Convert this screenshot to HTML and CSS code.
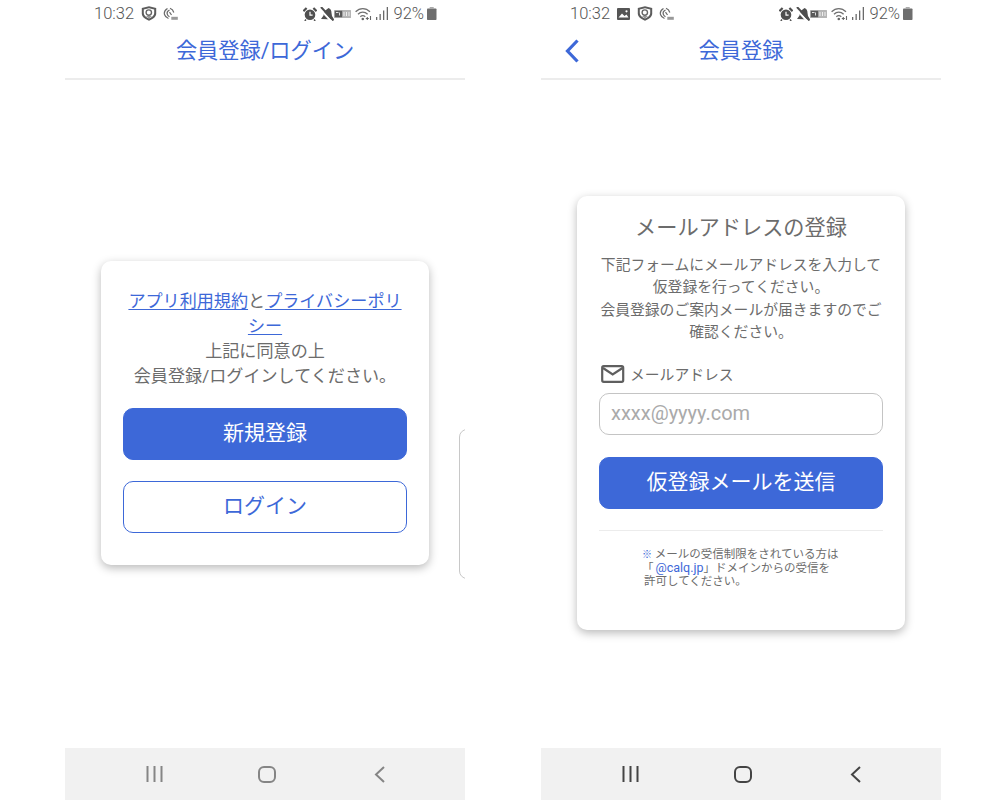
FILE: index.html
```html
<!DOCTYPE html>
<html lang="ja">
<head>
<meta charset="utf-8">
<title>会員登録</title>
<link rel="stylesheet" href="styles.css">
</head>
<body>
<svg class="defs" width="0" height="0" aria-hidden="true">
  <symbol id="i-shield" viewBox="0 0 16 15">
    <path d="M.8 2 8 .3 15.200 2v5.500c0 3.200-3 5.500-7.200 7.200C3.800 13 .8 10.700.8 7.500z" fill="#5c5c5c"/>
    <path d="M2.800 3.500 8 2.300l5.200 1.200v3.800c0 2.300-2.200 4-5.200 5.300-3-1.300-5.200-3-5.200-5.300z" fill="#fff"/>
    <circle cx="7.800" cy="6.600" r="2.700" fill="none" stroke="#666" stroke-width="1.400"/>
    <path d="M4.800 10.300h6.200L8 12z" fill="#777"/>
  </symbol>
  <symbol id="i-nfc" viewBox="0 0 15 14">
    <g fill="none" stroke="#6a6a6a" stroke-width="1.200">
      <path d="M4.500 1.500C2 3 .8 5 1.500 7.500c.5 1.800 2 3.300 4 4"/>
      <path d="M6.500 3C4.500 4 3.700 5.500 4.200 7.200c.3 1 1.200 2 2.300 2.500"/>
      <path d="M7 1.200c2 .8 3.300 2.200 3.800 4.300"/>
      <path d="M6.500 5.200 8.500 8"/>
    </g>
    <rect x="8.300" y="9.800" width="6.500" height="3" fill="#999"/>
  </symbol>
  <symbol id="i-image" viewBox="0 0 13 12">
    <rect width="13" height="12" rx="1" fill="#555"/>
    <path d="M1.500 9.500 5 5.500l2.500 2.500 2-1.500 2 3z" fill="#fff"/>
    <circle cx="9.500" cy="3.300" r="1.100" fill="#fff"/>
  </symbol>
  <symbol id="i-alarm" viewBox="0 0 14 14">
    <circle cx="7" cy="7.800" r="5.300" fill="#4f4f4f"/>
    <path d="M7 4.800v3.400h2.600" fill="none" stroke="#fff" stroke-width="1.200"/>
    <path d="M.4 4.200 3.600 1M13.600 4.200 10.400 1" stroke="#4f4f4f" stroke-width="2.200"/>
    <path d="M3 12.500 1.800 14M11 12.500l1.200 1.500" stroke="#4f4f4f" stroke-width="1.400"/>
  </symbol>
  <symbol id="i-mute" viewBox="0 0 14 14">
    <path d="M1 12 3.500 8.500 4 4.500 8.500 1c2 .8 3 2.500 3 5l.5 3 2 3.500z" fill="#4f4f4f"/>
    <path d="M-.5 1.500 10.500 13.500" stroke="#fff" stroke-width="2"/>
    <path d="M1 0 13.500 13.500" stroke="#4f4f4f" stroke-width="2"/>
  </symbol>
  <symbol id="i-lte" viewBox="0 0 17 8">
    <rect width="17" height="8" rx=".5" fill="#b5b5b5"/>
    <rect x=".8" y=".8" width="7.400" height="6.400" fill="#5a5a5a"/>
    <path d="M2 2.500h2.500M5.500 2.500v3" stroke="#ddd" stroke-width="1"/>
    <path d="M10 2v4M12.500 2v4M15 2v4" stroke="#eee" stroke-width="1"/>
  </symbol>
  <symbol id="i-wifi" viewBox="0 0 17 14">
    <g fill="none" stroke="#707070" stroke-width="1.300">
      <path d="M.6 4.800C4.800.6 10.800.6 15 4.800"/>
      <path d="M3 7.300c2.800-2.800 6.800-2.800 9.600 0"/>
      <path d="M5.300 9.700c1.500-1.300 3.500-1.300 5 0"/>
    </g>
    <circle cx="7.800" cy="12" r="1.300" fill="#666"/>
    <path d="M10.800 11.500h3M12.300 10v3M15.500 9v4" stroke="#666" stroke-width="1.100"/>
  </symbol>
  <symbol id="i-signal" viewBox="0 0 13 13">
    <g fill="#6a6a6a">
      <rect x="0" y="10" width="1.300" height="3"/>
      <rect x="3.500" y="7" width="1.300" height="6"/>
      <rect x="7" y="3.500" width="1.300" height="9.500"/>
      <rect x="10.700" y="0" width="1.300" height="13"/>
    </g>
  </symbol>
  <symbol id="i-battery" viewBox="0 0 10 13">
    <rect y="1.500" width="9.500" height="11.500" rx=".8" fill="#6e6e6e"/>
    <rect x="2.700" width="4" height="2" fill="#aaa"/>
  </symbol>
</svg>

<div class="stage">
  <section class="phone">
    <div class="status">
      <span class="time">10:32</span>
      <svg class="ic ic-shield"><use href="#i-shield"/></svg>
      <svg class="ic ic-nfc"><use href="#i-nfc"/></svg>
      <span class="spacer"></span>
      <svg class="ic ic-alarm"><use href="#i-alarm"/></svg>
      <svg class="ic ic-mute"><use href="#i-mute"/></svg>
      <svg class="ic ic-lte"><use href="#i-lte"/></svg>
      <svg class="ic ic-wifi"><use href="#i-wifi"/></svg>
      <svg class="ic ic-signal"><use href="#i-signal"/></svg>
      <span class="pct">92%</span>
      <svg class="ic ic-battery"><use href="#i-battery"/></svg>
    </div>
    <header class="titlebar"><h1 class="title">会員登録/ログイン</h1></header>
    <main class="content">
      <div class="card">
        <p class="agree"><a class="link" href="#">アプリ利用規約</a>と<a class="link" href="#">プライバシーポリシー</a><br>上記に同意の上<br>会員登録/ログインしてください。</p>
        <button class="btn btn-primary btn-signup" type="button">新規登録</button>
        <button class="btn btn-outline" type="button">ログイン</button>
      </div>
      <div class="peek"></div>
    </main>
    <nav class="navbar">
      <svg class="nav-ic" width="17" height="16" viewBox="0 0 17 16"><path d="M1.500 0v16M8.500 0v16M15.500 0v16" fill="none" stroke="#858585" stroke-width="2"/></svg>
      <svg class="nav-ic" width="18" height="17" viewBox="0 0 18 17"><rect x="1" y="1" width="16" height="15" rx="5" fill="none" stroke="#858585" stroke-width="2"/></svg>
      <svg class="nav-ic" width="11" height="17" viewBox="0 0 11 17"><path d="M10 1 2 8.500l8 7.500" fill="none" stroke="#858585" stroke-width="2"/></svg>
    </nav>
  </section>

  <section class="phone">
    <div class="status">
      <span class="time">10:32</span>
      <svg class="ic ic-image"><use href="#i-image"/></svg>
      <svg class="ic ic-shield"><use href="#i-shield"/></svg>
      <svg class="ic ic-nfc"><use href="#i-nfc"/></svg>
      <span class="spacer"></span>
      <svg class="ic ic-alarm"><use href="#i-alarm"/></svg>
      <svg class="ic ic-mute"><use href="#i-mute"/></svg>
      <svg class="ic ic-lte"><use href="#i-lte"/></svg>
      <svg class="ic ic-wifi"><use href="#i-wifi"/></svg>
      <svg class="ic ic-signal"><use href="#i-signal"/></svg>
      <span class="pct">92%</span>
      <svg class="ic ic-battery"><use href="#i-battery"/></svg>
    </div>
    <header class="titlebar">
      <svg class="back" width="14" height="24" viewBox="0 0 14 24"><path d="M12.500 1.500 2.500 12l10 10.500" fill="none" stroke="#3d68d8" stroke-width="3.200"/></svg>
      <h1 class="title">会員登録</h1>
    </header>
    <main class="content">
      <div class="card card-form">
        <h2 class="form-title">メールアドレスの登録</h2>
        <p class="lead">下記フォームにメールアドレスを入力して<br>仮登録を行ってください。<br>会員登録のご案内メールが届きますのでご<br>確認ください。</p>
        <label class="field-label" for="mail">
          <svg width="24" height="18" viewBox="0 0 24 18"><rect x="1.200" y="1.200" width="21" height="15.600" rx="1.500" fill="none" stroke="#5f5f5f" stroke-width="2.200"/><path d="m2 3 9.700 6.500L21.500 3" fill="none" stroke="#5f5f5f" stroke-width="2.200"/></svg>
          <span>メールアドレス</span>
        </label>
        <input class="input" id="mail" type="text" placeholder="xxxx@yyyy.com">
        <button class="btn btn-primary btn-send" type="button">仮登録メールを送信</button>
        <hr class="rule">
        <p class="note"><span class="mark">※</span> メールの受信制限をされている方は<br>「<span class="domain">@calq.jp</span>」ドメインからの受信を<br><span class="note-indent">許可してください。</span></p>
      </div>
    </main>
    <nav class="navbar navbar-dark">
      <svg class="nav-ic" width="17" height="16" viewBox="0 0 17 16"><path d="M1.500 0v16M8.500 0v16M15.500 0v16" fill="none" stroke="#444" stroke-width="2"/></svg>
      <svg class="nav-ic" width="18" height="17" viewBox="0 0 18 17"><rect x="1" y="1" width="16" height="15" rx="5" fill="none" stroke="#444" stroke-width="2"/></svg>
      <svg class="nav-ic" width="11" height="17" viewBox="0 0 11 17"><path d="M10 1 2 8.500l8 7.500" fill="none" stroke="#444" stroke-width="2"/></svg>
    </nav>
  </section>
</div>
</body>
</html>
```
FILE: styles.css
```css
* { box-sizing: border-box; }
html, body { margin: 0; height: 100%; background: #fff; overflow: hidden; }
body {
  font-family: Roboto, "Noto Sans CJK JP", "Liberation Sans", sans-serif;
  color: #6c6c6c;
}
.defs { position: absolute; }
.stage { display: flex; gap: 76px; padding-left: 65px; height: 800px; }
.phone { width: 400px; height: 800px; display: flex; flex-direction: column; }

.status {
  height: 27px; flex: none;
  display: flex; align-items: center;
  padding: 0 28px 0 29px;
}
.time { font-size: 16.500px; font-weight: 300; line-height: 1; margin: 1px 7px 0 0; color: #555; }
.pct { font-size: 16.500px; font-weight: 300; line-height: 1; margin: 1px 3px 0 4px; color: #555; }
.spacer { flex: 1; }
.ic { display: block; flex: none; }
.ic-shield { width: 16px; height: 15px; margin-right: 6px; }
.ic-image { width: 13px; height: 12px; margin-right: 7px; }
.ic-nfc { width: 15px; height: 14px; }
.ic-alarm { width: 14px; height: 14px; margin-right: 3px; }
.ic-mute { width: 14px; height: 14px; }
.ic-lte { width: 17px; height: 8px; margin-right: 4px; }
.ic-wifi { width: 17px; height: 14px; margin-right: 4px; }
.ic-signal { width: 13px; height: 13px; }
.ic-battery { width: 10px; height: 13px; }

.titlebar {
  position: relative;
  height: 53px; flex: none;
  display: flex; align-items: center; justify-content: center;
  padding-bottom: 3px;
  border-bottom: 2px solid #ececec;
}
.title { margin: 0; font-size: 21.200px; font-weight: 400; line-height: 1; color: #3d68d8; }
.back { position: absolute; left: 24px; top: 12px; }

.content {
  position: relative;
  flex: 1;
  display: flex; align-items: center; justify-content: center;
  padding-bottom: 3px;
  overflow: hidden;
}
.card {
  width: 328px;
  padding: 28px 22px 32px;
  background: #fff;
  border-radius: 10px;
  box-shadow: 0 3px 10px rgba(0, 0, 0, .28);
}
.card-form { padding: 17px 22px 42px; }
.peek {
  position: absolute; left: 394px; top: 349px;
  width: 40px; height: 150px;
  border: 1px solid #c8c8c8; border-radius: 8px;
}

.agree { margin: 0 0 19px; font-size: 17.100px; line-height: 25px; text-align: center; }
.link { color: #3d68d8; text-decoration: underline; text-underline-offset: 2px; }

.btn {
  display: block; width: 100%; height: 52px; padding: 0;
  font: inherit; font-size: 21px; line-height: 1;
  border-radius: 10px; cursor: pointer;
}
.btn-primary { background: #3d68d8; border: 1px solid #3d68d8; color: #fff; }
.btn-outline { background: #fff; border: 1px solid #3d68d8; color: #3d68d8; }
.btn-signup { margin-bottom: 21px; }
.btn-send { margin-top: 22px; }

.form-title { margin: 0 0 11px; font-size: 21.200px; font-weight: 400; line-height: 30px; text-align: center; }
.lead { margin: 0 0 18px; font-size: 14.800px; line-height: 22.500px; text-align: center; white-space: nowrap; }
.field-label { display: flex; align-items: center; gap: 5px; height: 24px; margin: 0 0 7px 2px; font-size: 14.800px; }
.input {
  display: block; width: 100%; height: 42px; padding: 0 0 2px 11px;
  font: inherit; font-size: 20px;
  background: #fff; border: 1px solid #c4c4c4; border-radius: 10px;
  outline: none;
}
.input::placeholder { color: #aaa; opacity: 1; }
.rule { margin: 21px 0 17px; border: 0; border-top: 1px solid #ececec; }
.note { margin: 0 0 0 43px; font-size: 11.500px; line-height: 13px; white-space: nowrap; }
.note-indent { margin-left: 2px; }
.mark, .domain { color: #3d68d8; }
.mark { font-size: 10px; }
.domain { font-size: 12.500px; margin-left: 2px; }

.navbar {
  height: 52px; flex: none;
  display: flex; align-items: center;
  background: #f1f1f1;
  padding-left: 81px;
}
.nav-ic { display: block; flex: none; }
.nav-ic:nth-child(1) { margin-right: 95px; }
.nav-ic:nth-child(2) { margin-right: 98px; }
```
